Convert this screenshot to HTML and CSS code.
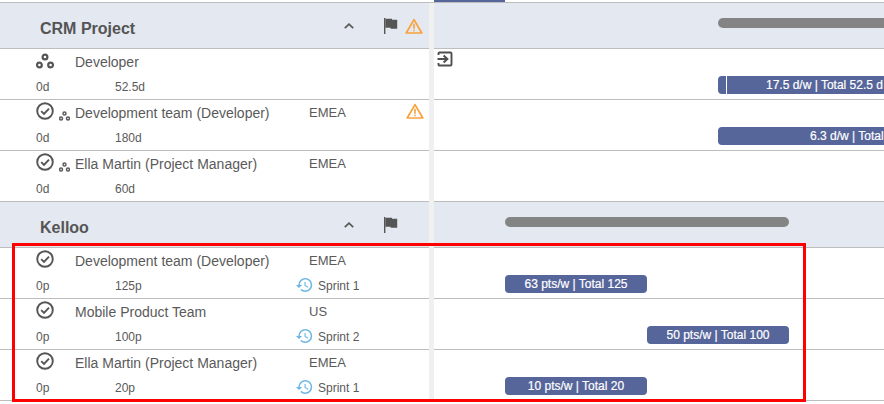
FILE: index.html
```html
<!DOCTYPE html>
<html lang="en">
<head>
<meta charset="utf-8">
<title>Resource plan</title>
<link rel="stylesheet" href="styles.css">
</head>
<body>
<svg class="defs" width="0" height="0" aria-hidden="true">
  <symbol id="check" viewBox="0 0 18 18"><circle cx="9" cy="9" r="7.8" fill="none" stroke="currentColor" stroke-width="1.9"/><path d="M5.2 9.2l2.8 2.8 5-5.4" fill="none" stroke="currentColor" stroke-width="1.9"/></symbol>
  <symbol id="team" viewBox="0 0 18 16"><g fill="none" stroke="currentColor"><circle cx="9" cy="4" r="2.4"/><circle cx="3.4" cy="12" r="2.4"/><circle cx="14.6" cy="12" r="2.4"/></g></symbol>
  <symbol id="flag" viewBox="0 0 14 16"><path d="M0 0h1.4v16H0z" fill="currentColor"/><path d="M1.4 .8H8v1h5.2v9H6.6v-1H1.4z" fill="currentColor"/></symbol>
  <symbol id="warn" viewBox="0 0 18 16"><path d="M9 1.6L1.2 15h15.6z" fill="none" stroke="#f9a23b" stroke-width="1.7" stroke-linejoin="round"/><path d="M8.2 5.8h1.6v5H8.2zM8.2 11.8h1.6v1.4H8.2z" fill="#f9a23b"/></symbol>
  <symbol id="chevron" viewBox="0 0 10 6"><path d="M.8 5.2L5 1.2l4.2 4" fill="none" stroke="currentColor" stroke-width="1.8"/></symbol>
  <symbol id="exit" viewBox="0 0 16 16"><path d="M1.5 4V2.5a1 1 0 0 1 1-1h11a1 1 0 0 1 1 1v11a1 1 0 0 1-1 1h-11a1 1 0 0 1-1-1V12" fill="none" stroke="currentColor" stroke-width="1.9"/><path d="M.5 8h9.5M6.6 4.4L10.4 8l-3.8 3.6" fill="none" stroke="currentColor" stroke-width="2"/></symbol>
  <symbol id="history" viewBox="1 3 22 18"><path d="M13 3a9 9 0 0 0-9 9H1l3.89 3.89.07.14L9 12H6c0-3.87 3.13-7 7-7s7 3.13 7 7-3.13 7-7 7c-1.93 0-3.68-.79-4.94-2.06l-1.42 1.42A8.954 8.954 0 0 0 13 21a9 9 0 0 0 0-18zm-1 5v5l4.28 2.54.72-1.21-3.5-2.08V8H12z" fill="currentColor"/></symbol>
</svg>
<main class="page">
  <div class="topstrip"><span class="topmark"></span></div>

  <section class="row head">
    <div class="left head-left">
      <h2 class="title">CRM Project</h2>
      <svg class="chevron"><use href="#chevron"/></svg>
      <svg class="flag"><use href="#flag"/></svg>
      <svg class="warn"><use href="#warn"/></svg>
    </div>
    <div class="gutter"></div>
    <div class="right"><div class="summary summary-crm"></div></div>
  </section>

  <div class="row item">
    <div class="left">
      <div class="line1">
        <span class="lead"><svg class="team-lg"><use href="#team"/></svg></span>
        <span class="name">Developer</span>
      </div>
      <div class="line2"><span class="start">0d</span><span class="end">52.5d</span></div>
    </div>
    <div class="gutter"></div>
    <div class="right">
      <svg class="exit"><use href="#exit"/></svg>
      <div class="bar bar-crm"><span class="bar-notch"></span><span class="bar-label">17.5 d/w | Total 52.5 d</span></div>
    </div>
  </div>

  <div class="row item">
    <div class="left">
      <div class="line1">
        <span class="lead"><svg class="check"><use href="#check"/></svg><svg class="team-sm"><use href="#team"/></svg></span>
        <span class="name">Development team (Developer)</span>
        <span class="region">EMEA</span>
        <svg class="warn warn-row"><use href="#warn"/></svg>
      </div>
      <div class="line2"><span class="start">0d</span><span class="end">180d</span></div>
    </div>
    <div class="gutter"></div>
    <div class="right"><div class="bar bar-crm"><span class="bar-label bar-label-wide">6.3 d/w | Total</span></div></div>
  </div>

  <div class="row item">
    <div class="left">
      <div class="line1">
        <span class="lead"><svg class="check"><use href="#check"/></svg><svg class="team-sm"><use href="#team"/></svg></span>
        <span class="name">Ella Martin (Project Manager)</span>
        <span class="region">EMEA</span>
      </div>
      <div class="line2"><span class="start">0d</span><span class="end">60d</span></div>
    </div>
    <div class="gutter"></div>
    <div class="right"></div>
  </div>

  <section class="row head">
    <div class="left head-left">
      <h2 class="title">Kelloo</h2>
      <svg class="chevron"><use href="#chevron"/></svg>
      <svg class="flag"><use href="#flag"/></svg>
    </div>
    <div class="gutter"></div>
    <div class="right"><div class="summary summary-kelloo"></div></div>
  </section>

  <div class="row item">
    <div class="left">
      <div class="line1">
        <span class="lead"><svg class="check"><use href="#check"/></svg></span>
        <span class="name">Development team (Developer)</span>
        <span class="region">EMEA</span>
      </div>
      <div class="line2"><span class="start">0p</span><span class="end">125p</span><svg class="history"><use href="#history"/></svg><span class="sprint">Sprint 1</span></div>
    </div>
    <div class="gutter"></div>
    <div class="right"><div class="bar bar-first">63 pts/w | Total 125</div></div>
  </div>

  <div class="row item">
    <div class="left">
      <div class="line1">
        <span class="lead"><svg class="check"><use href="#check"/></svg></span>
        <span class="name">Mobile Product Team</span>
        <span class="region">US</span>
      </div>
      <div class="line2"><span class="start">0p</span><span class="end">100p</span><svg class="history"><use href="#history"/></svg><span class="sprint">Sprint 2</span></div>
    </div>
    <div class="gutter"></div>
    <div class="right"><div class="bar bar-second">50 pts/w | Total 100</div></div>
  </div>

  <div class="row item">
    <div class="left">
      <div class="line1">
        <span class="lead"><svg class="check"><use href="#check"/></svg></span>
        <span class="name">Ella Martin (Project Manager)</span>
        <span class="region">EMEA</span>
      </div>
      <div class="line2"><span class="start">0p</span><span class="end">20p</span><svg class="history"><use href="#history"/></svg><span class="sprint">Sprint 1</span></div>
    </div>
    <div class="gutter"></div>
    <div class="right"><div class="bar bar-first">10 pts/w | Total 20</div></div>
  </div>

  <div class="highlight"></div>
</main>
</body>
</html>
```
FILE: styles.css
```css
* { box-sizing: border-box; }
html, body { margin: 0; height: 100%; background: #fff; overflow: hidden; }
body { font-family: "Liberation Sans", Arial, sans-serif; color: #5a5a5a; }
.defs { position: absolute; }
.page { position: relative; width: 884px; height: 404px; overflow: hidden; }

.topstrip { height: 3px; border-bottom: 1px solid #bdbdbd; padding-left: 434px; }
.topmark { display: block; width: 71px; height: 2px; background: #56659a; }

.row { display: grid; grid-template-columns: 429px 5px 1fr; border-bottom: 1px solid #bdbdbd; }
.head { height: 46px; background: #e4e8f0; }
.item { height: 51px; }
.gutter { background: #f0f0f0; margin-bottom: -1px; position: relative; }
.left { min-width: 0; }
.right { min-width: 0; position: relative; overflow: hidden; }

.head-left { display: flex; align-items: flex-start; padding-left: 40px; }
.title { margin: 0; width: 304px; padding-top: 17px; font-size: 16px; line-height: 18px; font-weight: 700; color: #555; }
.chevron { width: 10px; height: 6px; margin-top: 20px; color: #5a5a5a; flex: none; }
.flag { width: 14px; height: 16px; margin: 15px 0 0 30px; color: #555; flex: none; }
.warn { width: 18px; height: 16px; flex: none; }
.head-left .warn { margin: 15px 0 0 7px; }

.line1 { display: flex; align-items: center; height: 24px; margin-bottom: 2px; padding-left: 36px; font-size: 14px; line-height: 16px; }
.lead { width: 39px; height: 24px; display: flex; align-items: flex-start; flex: none; padding-top: 2px; }
.check { width: 18px; height: 18px; color: #555; flex: none; }
.team-sm { width: 11px; height: 10px; margin: 9px 0 0 5px; color: #5f5f5f; flex: none; stroke-width: 2.5; }
.team-lg { width: 18px; height: 16px; margin-top: 2px; color: #555; stroke-width: 2.2; }
.name { width: 234px; flex: none; white-space: nowrap; padding-top: 1px; }
.region { width: 97px; flex: none; font-size: 13px; padding-top: 1px; }
.warn-row { margin-top: -3px; }

.line2 { display: flex; align-items: center; height: 24px; padding-left: 36px; font-size: 12px; line-height: 14px; }
.start { width: 79px; flex: none; }
.end { width: 181px; flex: none; }
.history { width: 17px; height: 16px; margin-top: -3px; color: #6cb6e6; flex: none; }
.sprint { margin-left: 5px; }

.exit { position: absolute; left: 3px; top: 2px; width: 16px; height: 16px; color: #4f4f4f; }
.summary { height: 10px; margin-top: 15px; background: #848484; border-radius: 5px; }
.summary-crm { margin-left: 284px; width: 400px; }
.summary-kelloo { margin-left: 71px; width: 284px; }

.bar { height: 18px; margin-top: 27px; width: 142px; background: #56659a; border-radius: 4px; color: #fff; font-size: 12px; line-height: 19px; text-align: center; white-space: nowrap; -webkit-text-stroke: 0.2px #fff; }
.bar-first { margin-left: 71px; }
.bar-second { margin-left: 213px; }
.bar-crm { margin-left: 284px; width: 400px; text-align: left; position: relative; }
.bar-notch { position: absolute; left: 8px; top: 0; bottom: 0; width: 1px; background: #fff; }
.bar-label { display: block; padding-left: 48px; }
.bar-label-wide { padding-left: 92px; }

.highlight { position: absolute; left: 12px; top: 243px; width: 794px; height: 159px; border: 3px solid #f00; }
```
